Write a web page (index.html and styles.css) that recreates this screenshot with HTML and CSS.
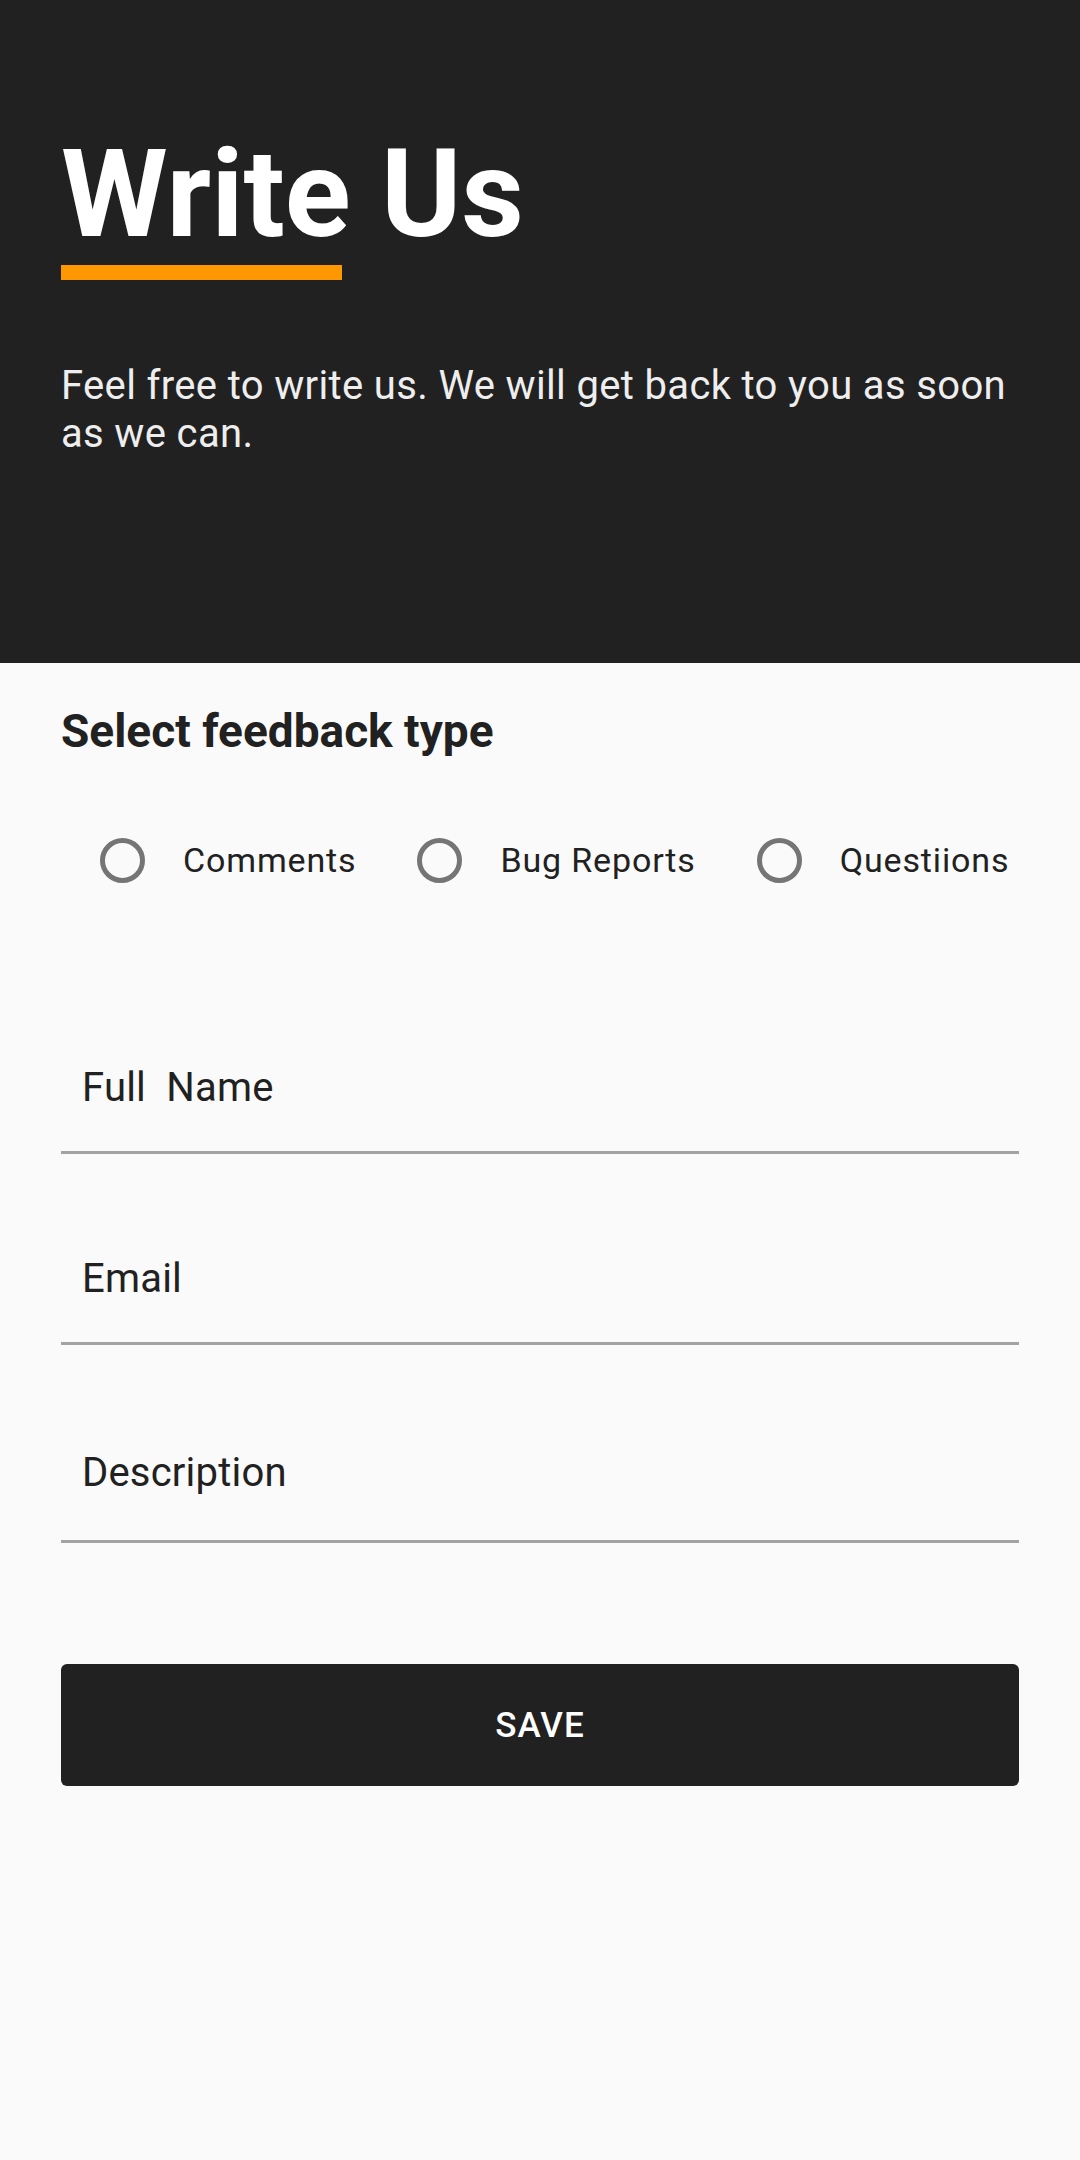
FILE: index.html
```html
<!DOCTYPE html>
<html lang="en">
<head>
<meta charset="utf-8">
<title>Write Us</title>
<link rel="stylesheet" href="styles.css">
</head>
<body>
<header class="hero">
  <h1 class="hero-title">Write Us</h1>
  <div class="hero-bar"></div>
  <p class="hero-text">Feel free to write us. We will get back to you as soon as we can.</p>
</header>
<main class="form">
  <h2 class="section-title">Select feedback type</h2>
  <div class="radio-row">
    <label class="radio"><span class="radio-circle"></span><span class="radio-label">Comments</span></label>
    <label class="radio"><span class="radio-circle"></span><span class="radio-label">Bug Reports</span></label>
    <label class="radio"><span class="radio-circle"></span><span class="radio-label">Questiions</span></label>
  </div>
  <div class="field field-first"><span class="field-text">Full&nbsp; Name</span></div>
  <div class="field"><span class="field-text">Email</span></div>
  <div class="field field-last"><span class="field-text">Description</span></div>
  <button class="save-btn" type="button">SAVE</button>
</main>
</body>
</html>
```

FILE: styles.css
```css
* { box-sizing: border-box; }
html, body { margin: 0; padding: 0; }
body {
  width: 1080px;
  min-height: 2160px;
  background: #fafafa;
  font-family: Roboto, "Noto Sans", "Liberation Sans", sans-serif;
  color: #212121;
}
.hero {
  background: #212121;
  padding: 134px 61px 205px 61px;
}
.hero-title {
  margin: 0;
  font-size: 122px;
  line-height: 122px;
  font-weight: 700;
  color: #ffffff;
}
.hero-bar {
  margin-top: 9px;
  width: 281px;
  height: 15px;
  background: #ff9800;
}
.hero-text {
  margin: 82px 0 0 0;
  font-size: 40px;
  line-height: 48px;
  letter-spacing: 0.35px;
  color: #eeeeee;
}
.form {
  padding: 44px 61px 0 61px;
}
.section-title {
  margin: 0;
  font-size: 46px;
  line-height: 48px;
  font-weight: 700;
  color: #212121;
}
.radio-row {
  margin-top: 75px;
  height: 60px;
  display: flex;
  flex-wrap: nowrap;
  align-items: center;
  gap: 61px;
  padding-left: 39px;
  margin-right: -61px;
}
.radio {
  display: flex;
  flex: none;
  align-items: center;
  gap: 38px;
}
.radio-circle {
  width: 45px;
  height: 45px;
  border: 5px solid #757575;
  border-radius: 50%;
  flex: none;
}
.radio-label {
  font-size: 34px;
  line-height: 40px;
  letter-spacing: 0.85px;
  white-space: nowrap;
  color: #212121;
}
.field {
  padding: 0 0 39px 21px;
  border-bottom: 3px solid #a3a3a3;
  margin-top: 101px;
}
.field-first { margin-top: 174px; }
.field-last { padding-bottom: 43px; margin-top: 104px; }
.field-text {
  display: block;
  font-size: 40px;
  line-height: 48px;
  letter-spacing: 0.2px;
  color: #212121;
}
.save-btn {
  display: block;
  width: 100%;
  height: 122px;
  margin-top: 121px;
  border: none;
  border-radius: 6px;
  background: #212121;
  color: #ffffff;
  font-family: Roboto, "Noto Sans", "Liberation Sans", sans-serif;
  font-size: 35px;
  font-weight: 500;
  letter-spacing: 1px;
}
```
